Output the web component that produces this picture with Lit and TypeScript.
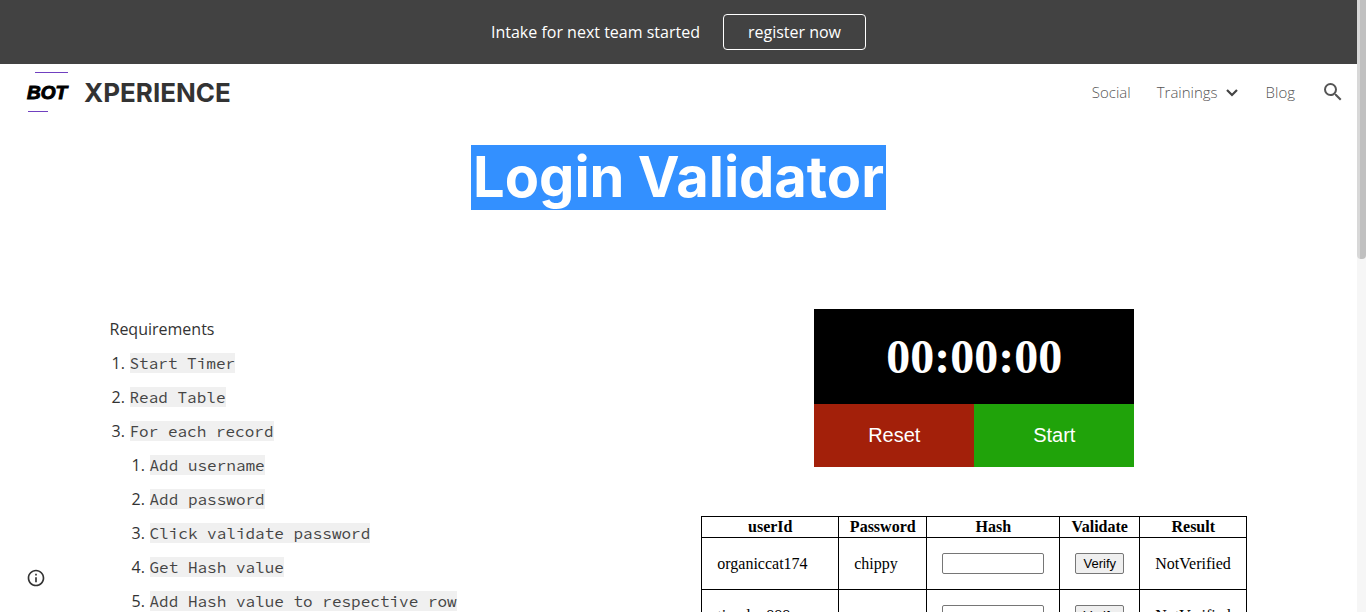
import { LitElement, html, css } from "lit";
import { customElement } from "lit/decorators.js";

const steps = ["Start Timer", "Read Table", "For each record"];
const subSteps = [
  "Add username",
  "Add password",
  "Click validate password",
  "Get Hash value",
  "Add Hash value to respective row",
];
const records = [
  { user: "organiccat174", password: "chippy" },
  { user: "tinydog888", password: "anon" },
];

@customElement("site-header")
class SiteHeader extends LitElement {
  static styles = css`
    :host { display: block; font-family: "Open Sans", sans-serif; }
    .banner {
      display: flex; align-items: center; justify-content: center; gap: 23px;
      height: 64px; background: #424242; color: #fff; font-size: 16px;
    }
    .register {
      box-sizing: border-box; height: 36px; padding: 0 24px;
      border: 1px solid #fff; border-radius: 4px;
      color: #fff; text-decoration: none; line-height: 34px;
    }
    .bar {
      display: flex; align-items: center; justify-content: space-between;
      height: 56px; padding: 0 12px 0 24px;
    }
    .brand { display: flex; align-items: center; gap: 12px; color: #333; text-decoration: none; }
    .logo { display: block; width: 48px; height: 48px; }
    .mark { font: italic bold 19px "Liberation Sans", sans-serif; stroke: #000; stroke-width: 1px; }
    .name { font: bold 26px Inter, sans-serif; }
    nav { display: flex; align-items: center; gap: 26px; }
    .link {
      display: flex; align-items: center; gap: 6px;
      color: #555; font-size: 15px; font-weight: 300; text-decoration: none;
    }
    .search { display: flex; padding: 0; border: 0; background: none; }
  `;
  render() {
    return html`
      <div class="banner">
        <span>Intake for next team started</span>
        <a class="register" href="#register">register now</a>
      </div>
      <div class="bar">
        <a class="brand" href="#home">
          <svg class="logo" viewBox="0 0 48 48" aria-hidden="true">
            <path d="M11 4.5H44M4 43.500H24" stroke="#7040c0" stroke-width="1" />
            <text class="mark" x="3" y="31">BOT</text>
          </svg>
          <span class="name">XPERIENCE</span>
        </a>
        <nav>
          <a class="link" href="#social">Social</a>
          <a class="link" href="#trainings">Trainings
            <svg width="16" height="14" viewBox="0 0 16 14" fill="none" stroke="#444" stroke-width="2.200"><path d="M3 5l5 5 5-5" /></svg>
          </a>
          <a class="link" href="#blog">Blog</a>
          <button class="search" aria-label="Search">
            <svg width="24" height="24" viewBox="0 0 24 24" fill="#555"><path d="M15.500 14h-.79l-.28-.27A6.470 6.470 0 0 0 16 9.500 6.500 6.500 0 1 0 9.500 16c1.610 0 3.090-.59 4.230-1.570l.27.28v.79l5 4.990L20.490 19l-4.990-5zm-6 0C7.010 14 5 11.990 5 9.500S7.010 5 9.500 5 14 7.010 14 9.500 11.990 14 9.500 14z" /></svg>
          </button>
        </nav>
      </div>`;
  }
}

@customElement("stop-watch")
class StopWatch extends LitElement {
  static styles = css`
    :host { display: grid; grid-template-columns: 1fr 1fr; width: 320px; }
    .time {
      grid-column: 1 / 3; background: #000; color: #fff; text-align: center;
      font: bold 48px/95px "Liberation Serif", serif;
    }
    button { height: 63px; padding: 0; border: 0; color: #fff; font: 20px "Liberation Sans", sans-serif; }
    .reset { background: #a3200a; }
    .start { background: #20a30a; }
  `;
  render() {
    return html`<div class="time" role="timer">00:00:00</div>
      <button class="reset">Reset</button><button class="start">Start</button>`;
  }
}

@customElement("record-table")
class RecordTable extends LitElement {
  static styles = css`
    :host { display: block; font: 16px/18px "Liberation Serif", serif; color: #000; }
    table { border-collapse: collapse; }
    th, td { border: 1px solid #000; }
    th { padding: 1px; }
    td { padding: 15px; }
    .c-user { width: 137px; }
    .c-pass { width: 88px; }
    .c-hash { width: 133px; }
    .c-check { width: 80px; }
    .c-result { width: 107px; }
    input, button {
      display: block; box-sizing: border-box; height: 21px;
      border: 1px solid #767676; border-radius: 2px; font: 13px "Liberation Sans", sans-serif;
    }
    input { width: 102px; padding: 1px 2px; background: #fff; }
    button { width: 49px; padding: 0; background: #efefef; color: #000; }
  `;
  render() {
    return html`<table>
      <colgroup><col class="c-user" /><col class="c-pass" /><col class="c-hash" /><col class="c-check" /><col class="c-result" /></colgroup>
      <thead><tr><th>userId</th><th>Password</th><th>Hash</th><th>Validate</th><th>Result</th></tr></thead>
      <tbody>
        ${records.map((r) => html`<tr>
          <td>${r.user}</td><td>${r.password}</td>
          <td><input type="text" aria-label="Hash for ${r.user}" /></td>
          <td><button>Verify</button></td>
          <td>NotVerified</td>
        </tr>`)}
      </tbody>
    </table>`;
  }
}

@customElement("app-root")
class AppRoot extends LitElement {
  static styles = css`
    :host { position: relative; display: flex; height: 100vh; overflow: hidden; background: #fff; }
    .page { flex: 1; min-width: 0; }
    .hero { display: flex; justify-content: center; padding-top: 25px; }
    h1 { margin: 0; padding: 0 2px; background: #3390ff; color: #fff; font: bold 56px/65px Inter, sans-serif; }
    .content {
      display: grid; grid-template-columns: 1fr 1fr; gap: 23px;
      max-width: 1160px; margin: 99px auto 0;
    }
    .text { padding: 3px 11px; color: #333; font: 16px/34px "Open Sans", sans-serif; }
    p { margin: 0; }
    ol { margin: 0; padding-left: 20px; list-style: none; counter-reset: step; }
    li { counter-increment: step; }
    li::before {
      content: counter(step) ".";
      display: inline-block; width: 20px; margin-left: -20px;
      box-sizing: border-box; padding-left: 2px;
    }
    code { background: #f0f0f0; color: #444; font: 16px "Source Code Pro", "DejaVu Sans Mono", monospace; }
    .tools { display: flex; flex-direction: column; align-items: center; gap: 49px; }
    .info {
      position: absolute; left: 26px; bottom: 24px;
      display: flex; padding: 0; border: 0; background: none;
    }
    .scroll { width: 9px; background: #f6f6f6; }
    .thumb { height: 259px; border-radius: 0 0 4px 4px; background: linear-gradient(90deg, #d8d8d8 0 3px, #c0c0c0 3px); }
  `;
  render() {
    return html`
      <div class="page">
        <site-header></site-header>
        <main>
          <div class="hero"><h1>Login Validator</h1></div>
          <div class="content">
            <section class="text">
              <p>Requirements</p>
              <ol>
                ${steps.map((s, i) => html`<li><code>${s}</code>${i === 2
                  ? html`<ol>${subSteps.map((t) => html`<li><code>${t}</code></li>`)}</ol>`
                  : ""}</li>`)}
              </ol>
            </section>
            <section class="tools">
              <stop-watch></stop-watch>
              <record-table></record-table>
            </section>
          </div>
        </main>
      </div>
      <div class="scroll" aria-hidden="true"><div class="thumb"></div></div>
      <button class="info" aria-label="Site information">
        <svg width="20" height="20" viewBox="0 0 24 24" fill="#333"><path d="M11 17h2v-6h-2v6zm1-15C6.480 2 2 6.480 2 12s4.480 10 10 10 10-4.480 10-10S17.520 2 12 2zm0 18c-4.410 0-8-3.590-8-8s3.590-8 8-8 8 3.590 8 8-3.590 8-8 8zM11 9h2V7h-2v2z" /></svg>
      </button>`;
  }
}
